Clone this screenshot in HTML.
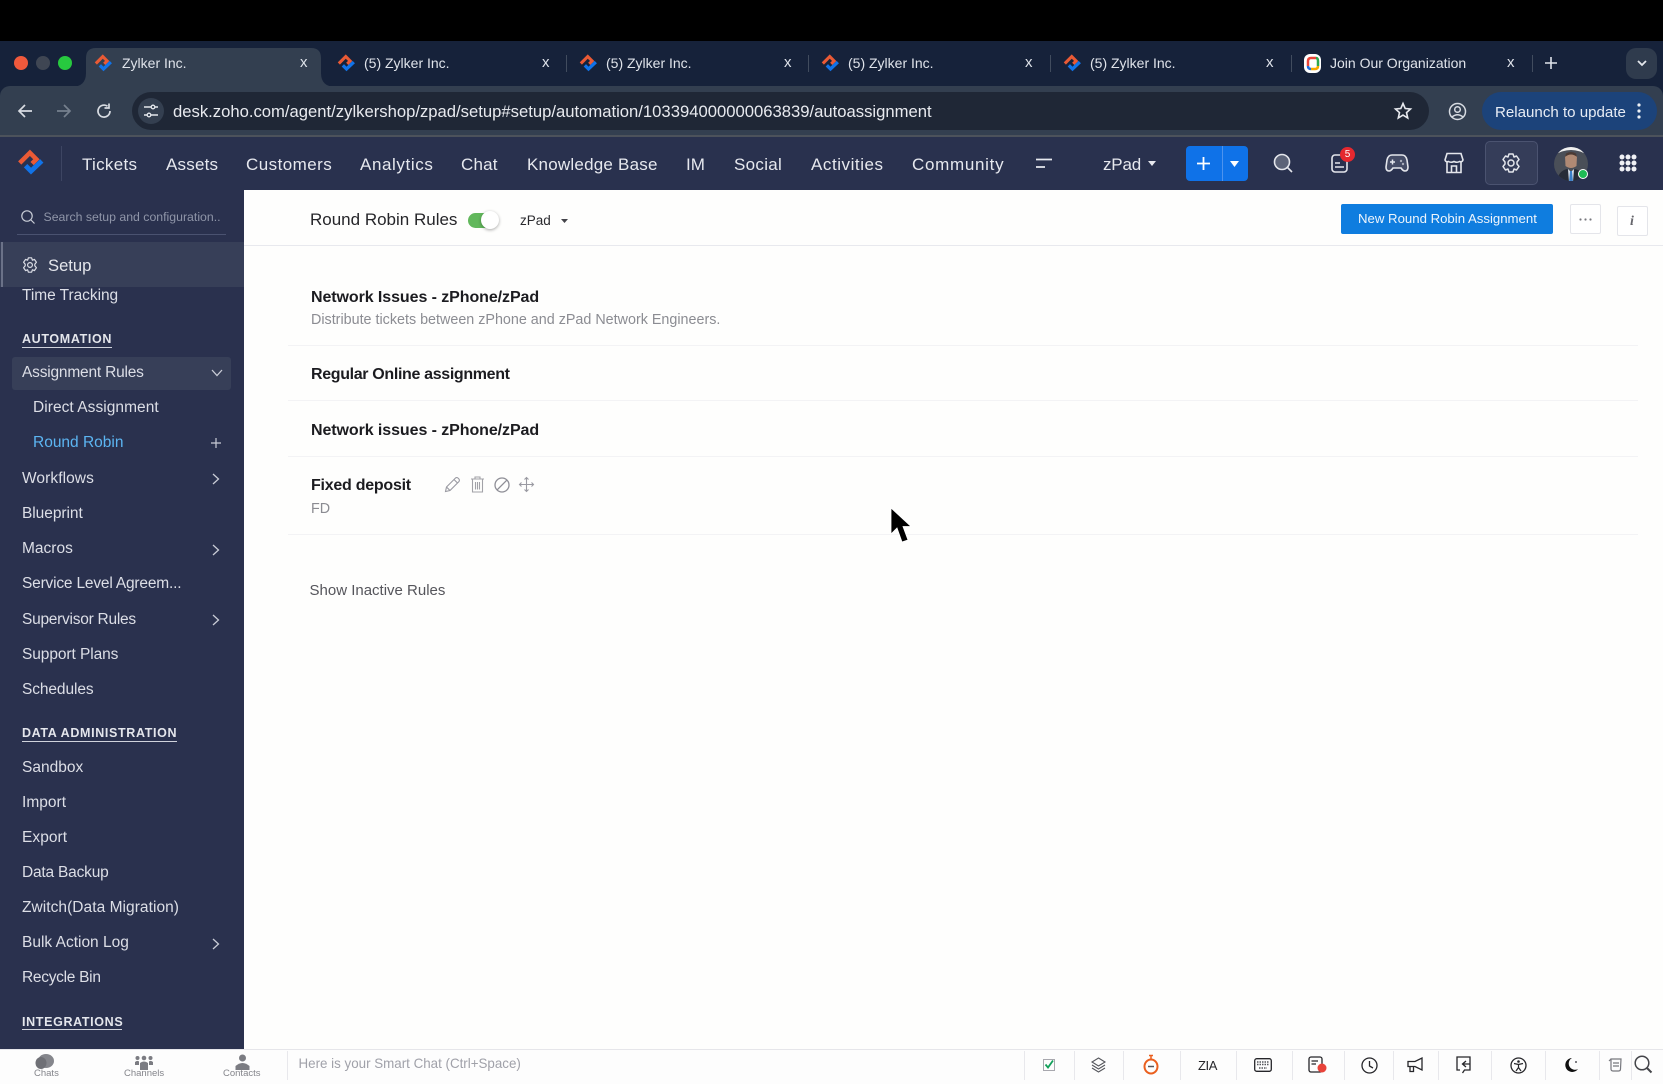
<!DOCTYPE html>
<html><head><meta charset="utf-8"><title>Zylker Inc.</title>
<style>
html,body{margin:0;padding:0;width:1663px;height:1080px;overflow:hidden;background:#fdfdfd;font-family:"Liberation Sans",sans-serif}
.a{position:absolute}
.t{position:absolute;white-space:nowrap;line-height:20px;height:20px;margin-top:-10px}
.tab{font-size:14px;color:#dfe3ea}
.x{font-size:15px;color:#dfe3ea;margin-left:-4px}
.sep{position:absolute;top:55px;width:1px;height:17px;background:#414c5e}
.nav{font-size:17px;color:#e6e8ee;top:164px;letter-spacing:.4px;margin-top:-9.5px}
.s{font-size:15.5px;color:#dcdee6;left:22px;margin-top:-9px}
.h{font-size:12.5px;font-weight:bold;letter-spacing:.65px;color:#e4e6ec;left:22px;margin-top:-9.5px}
.u{position:absolute;height:1px;background:#d0d3dc;left:22px}
.r{font-size:16px;font-weight:bold;color:#1c1c20;left:311px;margin-top:-9px}
.d{font-size:14.33px;color:#8b8c92;left:311px}
.l{position:absolute;left:288px;width:1350px;height:1px;background:#f3f3f5}
.b{position:absolute;top:1051px;width:1px;height:29px;background:#e8e8ec}
.lb{font-size:9.5px;color:#84858b;top:1074px}
svg{position:absolute;overflow:visible}
</style></head><body>
<svg width="0" height="0" style="position:absolute"><defs>
<symbol id="logo" viewBox="0 0 26 26"><path d="M2.500 13L12 3.500L18 9.500L14 13.500" fill="none" stroke="#ea5a35" stroke-width="4.200"/><path d="M8 15.500L13 20.500L23 11" fill="none" stroke="#1173e8" stroke-width="4.500"/></symbol>
<symbol id="chev" viewBox="0 0 8 12"><path d="M1 1L6.500 6L1 11" fill="none" stroke="#c9ccd6" stroke-width="1.300"/></symbol>
</defs></svg>

<div class="a" style="left:0;top:0;width:1663px;height:41px;background:#000"></div>
<!-- tab strip -->
<div class="a" style="left:0;top:41px;width:1663px;height:46px;background:#16223a"></div>
<div class="a" style="left:0;top:87px;width:1663px;height:20px;background:#16223a"></div>
<div class="a" style="left:14px;top:56px;width:14px;height:14px;border-radius:50%;background:#f0593c"></div>
<div class="a" style="left:36px;top:56px;width:14px;height:14px;border-radius:50%;background:#3f4653"></div>
<div class="a" style="left:58px;top:56px;width:14px;height:14px;border-radius:50%;background:#27c93f"></div>
<svg class="a" style="left:0;top:0" width="1663" height="90"><path d="M71 87Q86 87 86 73V58Q86 48 96 48H311Q321 48 321 58V73Q321 87 336 87Z" fill="#333f50"/></svg>
<svg style="left:94px;top:54px" width="19" height="19"><use href="#logo"/></svg>
<div class="t tab" style="left:122px;top:63px">Zylker Inc.</div><div class="t x" style="left:304px;top:63px">x</div>
<svg style="left:337px;top:54px" width="19" height="19"><use href="#logo"/></svg>
<div class="t tab" style="left:364px;top:63px">(5) Zylker Inc.</div><div class="t x" style="left:546px;top:63px">x</div><div class="sep" style="left:566px"></div>
<svg style="left:579px;top:54px" width="19" height="19"><use href="#logo"/></svg>
<div class="t tab" style="left:606px;top:63px">(5) Zylker Inc.</div><div class="t x" style="left:788px;top:63px">x</div><div class="sep" style="left:808px"></div>
<svg style="left:821px;top:54px" width="19" height="19"><use href="#logo"/></svg>
<div class="t tab" style="left:848px;top:63px">(5) Zylker Inc.</div><div class="t x" style="left:1029px;top:63px">x</div><div class="sep" style="left:1050px"></div>
<svg style="left:1063px;top:54px" width="19" height="19"><use href="#logo"/></svg>
<div class="t tab" style="left:1090px;top:63px">(5) Zylker Inc.</div><div class="t x" style="left:1270px;top:63px">x</div><div class="sep" style="left:1291px"></div>
<svg style="left:1303px;top:54px" width="19" height="19" viewBox="0 0 19 19"><rect x="1" y="0" width="17" height="19" rx="6" fill="#fff"/><path d="M5 12V7Q5 4 8 4H13" fill="none" stroke="#e8463a" stroke-width="2.500"/><path d="M13 4Q15 4 15 7V12" fill="none" stroke="#2fa84f" stroke-width="2.500"/><path d="M15 12Q15 15 12 15H8" fill="none" stroke="#f6a800" stroke-width="2.500"/><path d="M8 15Q5 15 5 12" fill="none" stroke="#1f6fe0" stroke-width="2.500"/></svg>
<div class="t tab" style="left:1330px;top:63px">Join Our Organization</div><div class="t x" style="left:1511px;top:63px">x</div><div class="sep" style="left:1532px"></div>
<svg style="left:1545px;top:57px" width="12" height="12"><path d="M6 0V12M0 6H12" stroke="#dfe3ea" stroke-width="1.600"/></svg>
<div class="a" style="left:1626px;top:48px;width:31px;height:31px;border-radius:10px;background:#2f3b4d"></div>
<svg style="left:1637px;top:60px" width="10" height="7"><path d="M1 1L5 5L9 1" fill="none" stroke="#e4e7ec" stroke-width="1.800"/></svg>

<!-- toolbar -->
<div class="a" style="left:0;top:86px;width:1663px;height:50px;background:#333f50;border-radius:10px 10px 0 0"></div>
<div class="a" style="left:0;top:135px;width:1663px;height:2px;background:#4c525b"></div>
<svg style="left:17px;top:103px" width="16" height="16"><path d="M15 8H2M8 2L2 8L8 14" fill="none" stroke="#d8dce2" stroke-width="1.700"/></svg>
<svg style="left:56px;top:103px" width="16" height="16"><path d="M1 8H14M8 2L14 8L8 14" fill="none" stroke="#76808e" stroke-width="1.700"/></svg>
<svg style="left:96px;top:103px" width="16" height="16"><path d="M14 8A6 6 0 1 1 11.500 3.200M13 0.500V5H8.500" fill="none" stroke="#d8dce2" stroke-width="1.700"/></svg>
<div class="a" style="left:132px;top:92px;width:1297px;height:38px;border-radius:19px;background:#1f2736"></div>
<div class="a" style="left:138px;top:98px;width:26px;height:26px;border-radius:50%;background:#343f50"></div>
<svg style="left:144px;top:104px" width="14" height="14"><path d="M0 3H7M11 3H14M0 11H3M7 11H14" stroke="#e4e7ec" stroke-width="1.400"/><circle cx="9" cy="3" r="1.800" fill="none" stroke="#e4e7ec" stroke-width="1.300"/><circle cx="5" cy="11" r="1.800" fill="none" stroke="#e4e7ec" stroke-width="1.300"/></svg>
<div class="t" style="left:173px;top:112px;font-size:16.65px;color:#e8eaef">desk.zoho.com/agent/zylkershop/zpad/setup#setup/automation/103394000000063839/autoassignment</div>
<svg style="left:1394px;top:102px" width="18" height="18" viewBox="0 0 18 18"><path d="M9 1.500L11.200 6.500L16.500 7L12.500 10.600L13.700 16L9 13.100L4.300 16L5.500 10.600L1.500 7L6.800 6.500Z" fill="none" stroke="#e8eaef" stroke-width="1.600"/></svg>
<svg style="left:1448px;top:102px" width="19" height="19" viewBox="0 0 19 19"><circle cx="9.500" cy="9.500" r="8" fill="none" stroke="#d8dce2" stroke-width="1.500"/><circle cx="9.500" cy="7.500" r="2.800" fill="none" stroke="#d8dce2" stroke-width="1.500"/><path d="M4 15Q9.500 10.500 15 15" fill="none" stroke="#d8dce2" stroke-width="1.500"/></svg>
<div class="a" style="left:1482px;top:92px;width:175px;height:38px;border-radius:19px;background:#1c437a"></div>
<div class="t" style="left:1495px;top:112.5px;font-size:15.1px;color:#e8edf5">Relaunch to update</div>
<svg style="left:1637px;top:103px" width="4" height="16"><circle cx="2" cy="2" r="1.600" fill="#eef1f6"/><circle cx="2" cy="8" r="1.600" fill="#eef1f6"/><circle cx="2" cy="14" r="1.600" fill="#eef1f6"/></svg>

<!-- nav -->
<div class="a" style="left:0;top:137px;width:1663px;height:53px;background:#29314e"></div>
<svg style="left:17px;top:149px" width="28" height="28"><use href="#logo"/></svg>
<div class="a" style="left:61px;top:146px;width:1px;height:35px;background:#3d4562"></div>
<div class="t nav" style="left:82px;letter-spacing:.3px">Tickets</div>
<div class="t nav" style="left:166px;letter-spacing:.2px">Assets</div>
<div class="t nav" style="left:246px;letter-spacing:.45px">Customers</div>
<div class="t nav" style="left:360px;letter-spacing:.6px">Analytics</div>
<div class="t nav" style="left:461px;letter-spacing:.2px">Chat</div>
<div class="t nav" style="left:527px;letter-spacing:.22px">Knowledge Base</div>
<div class="t nav" style="left:686px;letter-spacing:0">IM</div>
<div class="t nav" style="left:734px;letter-spacing:.3px">Social</div>
<div class="t nav" style="left:811px;letter-spacing:.55px">Activities</div>
<div class="t nav" style="left:912px;letter-spacing:.7px">Community</div>
<svg style="left:1036px;top:158px" width="16" height="11"><path d="M0 1.500H16M0 9H9" stroke="#e6e8ee" stroke-width="1.700"/></svg>
<div class="t nav" style="left:1103px;letter-spacing:-.2px">zPad</div>
<svg style="left:1148px;top:161px" width="8" height="5"><path d="M0 0H8L4 5Z" fill="#e6e8ee"/></svg>
<div class="a" style="left:1186px;top:146px;width:62px;height:35px;border-radius:4px;background:#0f72e8"></div>
<div class="a" style="left:1222px;top:146px;width:1px;height:35px;background:#4d93ee"></div>
<svg style="left:1197px;top:157px" width="13" height="13"><path d="M6.500 0V13M0 6.500H13" stroke="#fff" stroke-width="1.800"/></svg>
<svg style="left:1230px;top:161px" width="9" height="6"><path d="M0 0H9L4.500 6Z" fill="#fff"/></svg>
<svg style="left:1273px;top:153px" width="20" height="20" viewBox="0 0 20 20"><circle cx="9" cy="9" r="7.500" fill="#5c6378" stroke="#e4e6ec" stroke-width="1.600"/><path d="M14.500 14.500L19 19" stroke="#e4e6ec" stroke-width="1.600"/></svg>
<svg style="left:1331px;top:152px" width="20" height="22" viewBox="0 0 20 22"><rect x="1" y="3" width="15" height="17" rx="3" fill="none" stroke="#e4e6ec" stroke-width="1.600"/><path d="M4 11H9M4 15H13" stroke="#e4e6ec" stroke-width="1.600"/></svg>
<div class="a" style="left:1340px;top:147px;width:15px;height:15px;border-radius:50%;background:#e5282f;color:#fff;font-size:10px;line-height:15px;text-align:center">5</div>
<svg style="left:1385px;top:153px" width="24" height="20" viewBox="0 0 24 20"><path d="M7 2H17Q21 2 22 7L23 14Q23 18 20 18Q18 18 16 15H8Q6 18 4 18Q1 18 1 14L2 7Q3 2 7 2Z" fill="#454c66" stroke="#e4e6ec" stroke-width="1.600"/><path d="M5 9H10M7.500 6.500V11.500" stroke="#e4e6ec" stroke-width="1.500"/><circle cx="16" cy="8" r="1.200" fill="#aaaebc"/><circle cx="18" cy="11" r="1.200" fill="#aaaebc"/></svg>
<svg style="left:1444px;top:152px" width="20" height="22" viewBox="0 0 20 22"><path d="M3 1.500H17L19 8Q18 10.500 15.500 9.500Q13 11 10 9.500Q7 11 4.500 9.500Q2 10.500 1 8Z" fill="none" stroke="#e4e6ec" stroke-width="1.600"/><path d="M3 10V20.500H17V10M7.500 20V14H12.500V20" fill="none" stroke="#e4e6ec" stroke-width="1.600"/></svg>
<div class="a" style="left:1485px;top:141px;width:51px;height:42px;border-radius:5px;background:#353d59;border:1px solid #4b5370"></div>
<svg style="left:1501px;top:153px" width="20" height="20" viewBox="0 0 20 20"><path d="M8 1H12L13 4L15.500 3L18 6.500L16 9V11L18 13.500L15.500 17L13 16L12 19H8L7 16L4.500 17L2 13.500L4 11V9L2 6.500L4.500 3L7 4Z" fill="none" stroke="#e4e6ec" stroke-width="1.500" stroke-linejoin="round"/><circle cx="10" cy="10" r="3" fill="none" stroke="#e4e6ec" stroke-width="1.500"/></svg>
<svg style="left:1553px;top:146px" width="36" height="36" viewBox="0 0 36 36"><defs><clipPath id="av"><circle cx="18" cy="18" r="17"/></clipPath></defs><g clip-path="url(#av)"><rect width="36" height="36" fill="#4a4f58"/><path d="M0 0H36V10Q18 -2 0 10Z" fill="#f0f0f0"/><path d="M12 10Q18 5 24 10L23.500 20Q18 24 12.500 20Z" fill="#b08a74"/><path d="M12 11Q18 6 24 11L23 7.500Q18 4.500 13 7.500Z" fill="#4a3a34"/><path d="M4 36Q5 25 14 23L18 26L22 23Q31 25 32 36Z" fill="#262c38"/><path d="M15 23L18 26L21 23L20 36H16Z" fill="#dfe6ef"/><path d="M17 25H19L20 36H16Z" fill="#3a7fc8"/></g></svg>
<div class="a" style="left:1578px;top:169px;width:8px;height:8px;border-radius:50%;background:#1fbb55;border:1.500px solid #fff"></div>
<svg style="left:1619px;top:154px" width="18" height="18"><g fill="#f0f1f5"><circle cx="3" cy="3" r="2.500"/><circle cx="9" cy="3" r="2.500"/><circle cx="15" cy="3" r="2.500"/><circle cx="3" cy="9" r="2.500"/><circle cx="9" cy="9" r="2.500"/><circle cx="15" cy="9" r="2.500"/><circle cx="3" cy="15" r="2.500"/><circle cx="9" cy="15" r="2.500"/><circle cx="15" cy="15" r="2.500"/></g></svg>

<!-- sidebar -->
<div class="a" style="left:0;top:190px;width:244px;height:859px;background:#2a314e"></div>
<svg style="left:21px;top:210px" width="14" height="14" viewBox="0 0 14 14"><circle cx="6" cy="6" r="5.200" fill="none" stroke="#c8ccd6" stroke-width="1.200"/><path d="M10 10L13.500 13.500" stroke="#c8ccd6" stroke-width="1.200"/></svg>
<div class="t" style="left:43.500px;top:217px;font-size:12.300px;color:#8f95a8">Search setup and configuration..</div>
<div class="a" style="left:17px;top:234px;width:209px;height:1px;background:#4a5270"></div>
<div class="a" style="left:0;top:242px;width:244px;height:45px;background:#373f58"></div>
<div class="a" style="left:1px;top:242px;width:2px;height:45px;background:#6b7288"></div>
<svg style="left:22px;top:257px" width="16" height="16" viewBox="0 0 20 20"><path d="M8 1H12L13 4L15.500 3L18 6.500L16 9V11L18 13.500L15.500 17L13 16L12 19H8L7 16L4.500 17L2 13.500L4 11V9L2 6.500L4.500 3L7 4Z" fill="none" stroke="#dcdee6" stroke-width="1.500" stroke-linejoin="round"/><circle cx="10" cy="10" r="3" fill="none" stroke="#dcdee6" stroke-width="1.500"/></svg>
<div class="t" style="left:48px;top:266px;font-size:16.6px;color:#e4e6ec">Setup</div>
<div class="t s" style="top:295px;letter-spacing:-.05px">Time Tracking</div>
<div class="t h" style="top:338px">AUTOMATION</div><div class="u" style="top:347px;width:90px"></div>
<div class="a" style="left:12px;top:357px;width:219px;height:33px;border-radius:3px;background:#373f58"></div>
<div class="t s" style="top:372px;letter-spacing:-.2px">Assignment Rules</div>
<svg style="left:211px;top:369px" width="12" height="8"><path d="M1 1L6 6.500L11 1" fill="none" stroke="#c9ccd6" stroke-width="1.300"/></svg>
<div class="t s" style="top:407px;left:33px;letter-spacing:.05px">Direct Assignment</div>
<div class="t s" style="top:442px;left:33px;color:#5cb5f2">Round Robin</div>
<svg style="left:211px;top:438px" width="10" height="10"><path d="M5 0V10M0 5H10" stroke="#c9ccd6" stroke-width="1.200"/></svg>
<div class="t s" style="top:477.500px;letter-spacing:.08px">Workflows</div><svg style="left:212px;top:473px" width="8" height="12"><use href="#chev"/></svg>
<div class="t s" style="top:512.500px;letter-spacing:-.05px">Blueprint</div>
<div class="t s" style="top:548px">Macros</div><svg style="left:212px;top:544px" width="8" height="12"><use href="#chev"/></svg>
<div class="t s" style="top:583px;letter-spacing:-.19px">Service Level Agreem...</div>
<div class="t s" style="top:618.500px;letter-spacing:-.26px">Supervisor Rules</div><svg style="left:212px;top:614px" width="8" height="12"><use href="#chev"/></svg>
<div class="t s" style="top:653.500px;letter-spacing:-.08px">Support Plans</div>
<div class="t s" style="top:689px;letter-spacing:-.1px">Schedules</div>
<div class="t h" style="top:732.500px">DATA ADMINISTRATION</div><div class="u" style="top:741px;width:155px"></div>
<div class="t s" style="top:766.500px">Sandbox</div>
<div class="t s" style="top:802px;letter-spacing:.02px">Import</div>
<div class="t s" style="top:837px;letter-spacing:.05px">Export</div>
<div class="t s" style="top:872px;letter-spacing:-.2px">Data Backup</div>
<div class="t s" style="top:907px;letter-spacing:.05px">Zwitch(Data Migration)</div>
<div class="t s" style="top:942px">Bulk Action Log</div><svg style="left:212px;top:938px" width="8" height="12"><use href="#chev"/></svg>
<div class="t s" style="top:977px;letter-spacing:-.29px">Recycle Bin</div>
<div class="t h" style="top:1021px">INTEGRATIONS</div><div class="u" style="top:1029px;width:100px"></div>

<!-- main -->
<div class="a" style="left:244px;top:190px;width:1419px;height:859px;background:#fefefd"></div>
<div class="a" style="left:244px;top:245px;width:1419px;height:1px;background:#e8e9ee"></div>
<div class="t" style="left:310px;top:220px;font-size:17px;color:#26262a">Round Robin Rules</div>
<div class="a" style="left:468px;top:213px;width:30px;height:15px;border-radius:8px;background:#62b85c"></div>
<div class="a" style="left:481px;top:211px;width:18px;height:18px;border-radius:50%;background:#fff;box-shadow:0 1px 3px rgba(0,0,0,.35)"></div>
<div class="t" style="left:520px;top:221px;font-size:13.5px;color:#2a2a2e">zPad</div>
<svg style="left:561px;top:219px" width="7" height="4"><path d="M0 0H7L3.500 4Z" fill="#44444a"/></svg>
<div class="a" style="left:1341px;top:204px;width:212px;height:30px;border-radius:2px;background:#0f7ddf"></div>
<div class="t" style="left:1358px;top:219px;font-size:13.2px;color:#eef5fc">New Round Robin Assignment</div>
<div class="a" style="left:1570px;top:204px;width:29px;height:28px;border:1px solid #e4e5ea;border-radius:2px;background:#fff"></div>
<svg style="left:1579px;top:218px" width="13" height="3"><circle cx="1.500" cy="1.500" r="1.100" fill="#77777d"/><circle cx="6.500" cy="1.500" r="1.100" fill="#77777d"/><circle cx="11.500" cy="1.500" r="1.100" fill="#77777d"/></svg>
<div class="a" style="left:1617px;top:206px;width:29px;height:28px;border:1px solid #e4e5ea;border-radius:2px;background:#fff"></div>
<div class="t" style="left:1630px;top:222px;font-size:14px;font-family:'Liberation Serif',serif;font-style:italic;font-weight:bold;color:#66666c">i</div>

<div class="t r" style="top:297px;letter-spacing:-.08px">Network Issues - zPhone/zPad</div>
<div class="t d" style="top:320px">Distribute tickets between zPhone and zPad Network Engineers.</div>
<div class="l" style="top:345px"></div>
<div class="t r" style="top:374px;letter-spacing:-.34px">Regular Online assignment</div>
<div class="l" style="top:400px"></div>
<div class="t r" style="top:430px;letter-spacing:-.08px">Network issues - zPhone/zPad</div>
<div class="l" style="top:456px"></div>
<div class="t r" style="top:485px;letter-spacing:-.25px">Fixed deposit</div>
<svg style="left:444px;top:476px" width="17" height="17" viewBox="0 0 17 17"><path d="M1.500 15.500L2.500 11L11.500 2Q13 1 14.500 2.500Q16 4 15 5.500L6 14.500ZM2.500 11L6 14.500M10 3.500L13.500 7" fill="none" stroke="#9a9aa2" stroke-width="1.100"/></svg>
<svg style="left:470px;top:476px" width="15" height="17" viewBox="0 0 15 17"><path d="M1 3H14M5 3V1H10V3M2.500 3V16H12.500V3M5.500 6V13.500M7.500 6V13.500M9.500 6V13.500" fill="none" stroke="#a2a2a8" stroke-width="1.100"/></svg>
<svg style="left:494px;top:477px" width="16" height="16" viewBox="0 0 16 16"><circle cx="8" cy="8" r="7" fill="none" stroke="#8e8e96" stroke-width="1.300"/><path d="M3.200 12.800L12.800 3.200" stroke="#8e8e96" stroke-width="1.300"/></svg>
<svg style="left:519px;top:477px" width="15" height="15" viewBox="0 0 15 15"><path d="M7.500 0.500V14.500M0.500 7.500H14.500M5.500 2.500L7.500 0.500L9.500 2.500M5.500 12.500L7.500 14.500L9.500 12.500M2.500 5.500L0.500 7.500L2.500 9.500M12.500 5.500L14.500 7.500L12.500 9.500" fill="none" stroke="#9a9aa2" stroke-width="1.100"/></svg>
<div class="t d" style="top:509px">FD</div>
<div class="l" style="top:534px"></div>
<div class="t" style="left:309.5px;top:590.5px;font-size:15px;color:#55555b">Show Inactive Rules</div>
<svg style="left:890px;top:507px" width="23" height="38" viewBox="0 0 23 38"><path d="M1 1V27L7 21L12 35L18 33L13 19.500H21Z" fill="#000" stroke="#fff" stroke-width="0.800"/></svg>

<!-- bottom bar -->
<div class="a" style="left:0;top:1049px;width:1663px;height:31px;background:#fdfdfd;border-top:1px solid #e6e6ea;box-sizing:border-box"></div>
<svg style="left:35px;top:1054px" width="20" height="16" viewBox="0 0 20 16"><ellipse cx="11" cy="7" rx="8" ry="7" fill="#85868c"/><ellipse cx="6" cy="9" rx="5.500" ry="6" fill="#6f7076"/></svg>
<svg style="left:134px;top:1055px" width="20" height="15" viewBox="0 0 20 15"><g fill="#7b7c82"><circle cx="10" cy="3" r="2.300"/><circle cx="3.500" cy="3" r="2"/><circle cx="16.500" cy="3" r="2"/><path d="M6 15V8Q10 5 14 8V15Z"/><path d="M1 10V7Q3.500 5 5 6.500V10Z"/><path d="M15 6.500Q16.500 5 19 7V10H15Z"/></g></svg>
<svg style="left:235px;top:1054px" width="15" height="16" viewBox="0 0 15 16"><circle cx="7.500" cy="4" r="3.500" fill="#7b7c82"/><path d="M0.500 16V12Q7.500 6 14.500 12V16Z" fill="#7b7c82"/></svg>
<div class="t lb" style="left:34px">Chats</div>
<div class="t lb" style="left:124px">Channels</div>
<div class="t lb" style="left:223px">Contacts</div>
<div class="b" style="left:287px"></div>
<div class="t" style="left:298.5px;top:1064px;font-size:13.36px;color:#a0a1a9">Here is your Smart Chat (Ctrl+Space)</div>
<div class="b" style="left:1024px"></div><div class="b" style="left:1074px"></div><div class="b" style="left:1123px"></div><div class="b" style="left:1180px"></div><div class="b" style="left:1236px"></div><div class="b" style="left:1292px"></div><div class="b" style="left:1344px"></div><div class="b" style="left:1393px"></div><div class="b" style="left:1438px"></div><div class="b" style="left:1491px"></div><div class="b" style="left:1545px"></div><div class="b" style="left:1599px"></div><div class="b" style="left:1631px"></div>
<svg style="left:1043px;top:1059px" width="12" height="12" viewBox="0 0 12 12"><rect x="0.500" y="0.500" width="11" height="11" fill="none" stroke="#a8a8ae"/><path d="M2.500 5.500L5 8.500L10 1.500" fill="none" stroke="#13a05a" stroke-width="1.800"/></svg>
<svg style="left:1091px;top:1057px" width="15" height="16" viewBox="0 0 15 16"><path d="M7.500 1L14 5L7.500 9L1 5ZM1 8L7.500 12L14 8M1 11L7.500 15L14 11" fill="none" stroke="#55565c" stroke-width="1.100"/></svg>
<svg style="left:1143px;top:1054px" width="16" height="21" viewBox="0 0 16 21"><ellipse cx="8" cy="12.500" rx="6.500" ry="7" fill="none" stroke="#ea5f1e" stroke-width="2"/><path d="M8 5.500V2M6 1.500H10" stroke="#ea5f1e" stroke-width="1.500"/><path d="M5 12.500H11" stroke="#55565c" stroke-width="1.500"/></svg>
<div class="t" style="left:1198px;top:1066px;font-size:13px;color:#26262a;letter-spacing:-.4px">ZIA</div>
<svg style="left:1254px;top:1058px" width="18" height="14" viewBox="0 0 18 14"><rect x="0.700" y="0.700" width="16.600" height="12.600" rx="2" fill="none" stroke="#26262a" stroke-width="1.300"/><path d="M3 4H15M3 6.500H15M5 10H13" stroke="#55565c" stroke-width="1.400" stroke-dasharray="1.500 1"/></svg>
<svg style="left:1308px;top:1056px" width="19" height="17" viewBox="0 0 19 17"><rect x="1" y="1" width="13" height="15" rx="2" fill="none" stroke="#26262a" stroke-width="1.300"/><path d="M3.500 5H10M3.500 8H8" stroke="#26262a" stroke-width="1.300"/><circle cx="14" cy="12" r="4.500" fill="#e8433a"/></svg>
<svg style="left:1361px;top:1057px" width="17" height="17" viewBox="0 0 17 17"><circle cx="8.500" cy="8.500" r="7.500" fill="none" stroke="#26262a" stroke-width="1.300"/><path d="M8.500 4V9L12 11" fill="none" stroke="#26262a" stroke-width="1.300"/></svg>
<svg style="left:1407px;top:1057px" width="16" height="16" viewBox="0 0 16 16"><path d="M15 1V13L8 9.500H1V4.500H8ZM3 9.500V14.500H6.500V10" fill="none" stroke="#26262a" stroke-width="1.300"/></svg>
<svg style="left:1456px;top:1056px" width="15" height="18" viewBox="0 0 15 18"><path d="M4 14H1V1H14V14H8.500L6.500 17M10 5L6.500 8L10 11M6.500 8H14" fill="none" stroke="#26262a" stroke-width="1.300"/></svg>
<svg style="left:1510px;top:1057px" width="17" height="17" viewBox="0 0 17 17"><circle cx="8.500" cy="8.500" r="7.500" fill="none" stroke="#26262a" stroke-width="1.300"/><circle cx="8.500" cy="4.500" r="1.300" fill="#26262a"/><path d="M4 6.500L8.500 7.500L13 6.500M8.500 7.500V10.500L6 14M8.500 10.500L11 14" fill="none" stroke="#26262a" stroke-width="1.200"/></svg>
<svg style="left:1566px;top:1057px" width="13" height="16" viewBox="0 0 13 16"><path d="M6 1A7 7 0 1 0 12 12A6 6 0 0 1 6 1Z" fill="#111"/><circle cx="10" cy="5" r="1" fill="#55565c"/></svg>
<svg style="left:1608px;top:1056px" width="15" height="17" viewBox="0 0 15 17"><path d="M3 3H13L12.500 13Q12.500 15 10.500 15H5Q3 15 3 13Z M1 5L3 3M5 7H11M5 10H11" fill="none" stroke="#77787e" stroke-width="1.200"/></svg>
<svg style="left:1634px;top:1055px" width="19" height="20" viewBox="0 0 19 20"><circle cx="8" cy="8" r="6.800" fill="none" stroke="#44454a" stroke-width="1.500"/><path d="M13 13L17.500 17.500" stroke="#44454a" stroke-width="2"/></svg>
</body></html>
